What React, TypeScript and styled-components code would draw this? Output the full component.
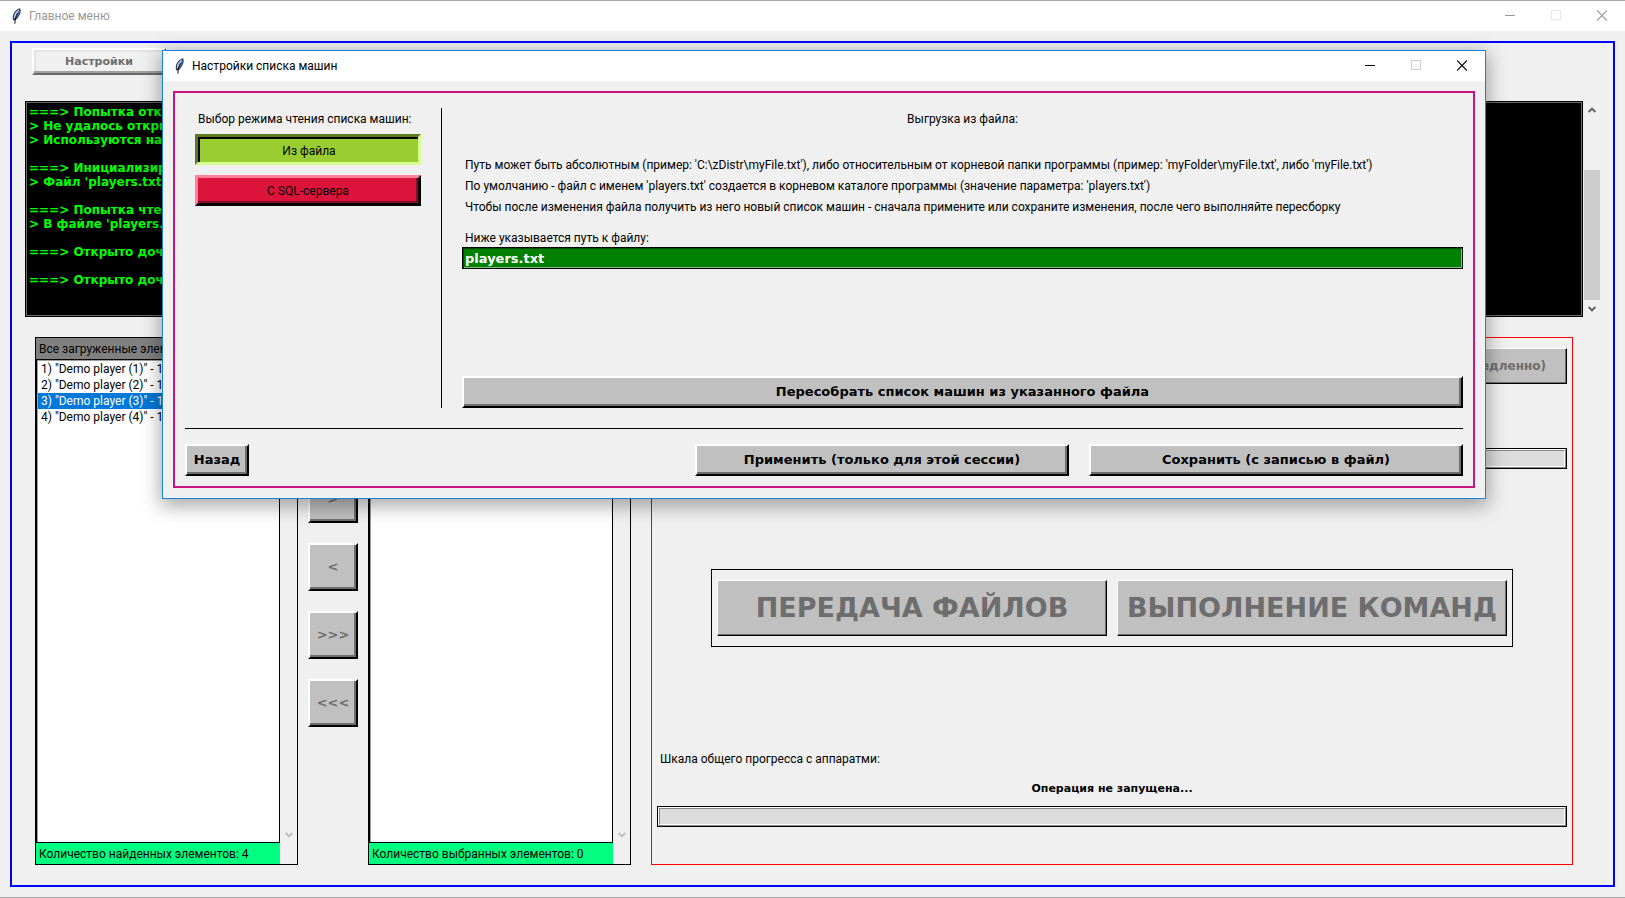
import React, { useState } from 'react';
import styled, { createGlobalStyle, css } from 'styled-components';

const uiFont = 'Roboto, "Open Sans", sans-serif';
const boldFont = '"DejaVu Sans", sans-serif';

const GlobalStyle = createGlobalStyle`
  *, *::before, *::after { box-sizing: border-box; }
  body {
    margin: 0;
    background: #f0f0f0;
    color: #000;
    font: 12px/16px ${uiFont};
  }
  button, input { font: inherit; color: inherit; margin: 0; }
  button { padding: 0; }
  ul, p, h1, h2 { margin: 0; padding: 0; font-size: inherit; font-weight: normal; }
  ul { list-style: none; }
`;

/* ---------- window chrome ---------- */

const Desktop = styled.div`
  position: relative;
  display: flex;
  flex-direction: column;
  min-height: 100vh;
  border-top: 1px solid #aaa;
  border-bottom: 1px solid #aaa;
  overflow: hidden;
`;

const TitleBar = styled.header<{ $inactive?: boolean }>`
  display: flex;
  align-items: center;
  height: 30px;
  padding-left: 12px;
  gap: 8px;
  background: #fff;
  color: ${(p) => (p.$inactive ? '#999' : '#000')};
`;

const TitleText = styled.h1`
  flex: 1;
  white-space: nowrap;
`;

const WindowControls = styled.div`
  display: flex;
  align-self: stretch;
`;

const ControlButton = styled.button<{ $ink: string }>`
  display: flex;
  align-items: center;
  justify-content: center;
  width: 46px;
  padding-bottom: 1px;
  border: 0;
  background: none;
  color: ${(p) => p.$ink};
`;

const Feather = () => (
  <svg width="9" height="16" viewBox="0 0 9 16" aria-hidden="true">
    <path d="M7.9 0.3 C5.4 0.6 2.6 3.2 1.4 6.2 C0.6 8.4 0.6 10.2 1.2 12.2 L3 12.4 C5 11.4 6.6 9.4 7.2 7.6 L8.2 5.6 C8.9 3.6 8.9 1.6 7.9 0.3 Z" fill="#2b3340" />
    <path d="M7.3 1.2 C5 2.2 3.2 4.4 2.4 6.6 C1.8 8.2 1.7 9.6 2 11 C4 9 6.2 5.4 7.3 1.2 Z" fill="#a9cdf8" />
    <path d="M7.6 1.6 C7.2 5 5.2 8.4 3.2 11.2 C4.8 10.4 6 8.8 6.4 7.2 C7.6 5.8 8.2 3.6 7.6 1.6 Z" fill="#4a8ae0" />
    <path d="M5.6 5 C4 8 2.9 11 2.9 15.8" fill="none" stroke="#000" strokeWidth="0.9" />
  </svg>
);

type ControlsProps = { ink: string; faint: string };

const Controls = ({ ink, faint }: ControlsProps) => (
  <WindowControls>
    <ControlButton $ink={ink} aria-label="Свернуть">
      <svg width="10" height="11" viewBox="0 0 10 11"><path d="M0 5.5H10" stroke="currentColor" /></svg>
    </ControlButton>
    <ControlButton $ink={faint} aria-label="Развернуть" disabled>
      <svg width="10" height="11" viewBox="0 0 10 11"><path d="M0.5 0.5H9.5V9.5H0.5Z" fill="none" stroke="currentColor" /></svg>
    </ControlButton>
    <ControlButton $ink={ink} aria-label="Закрыть">
      <svg width="10" height="11" viewBox="0 0 10 11"><path d="M0 0.5L10 10.5M10 0.5L0 10.5" stroke="currentColor" strokeWidth="1.1" /></svg>
    </ControlButton>
  </WindowControls>
);

/* ---------- raised and sunken widgets ---------- */

const BevelButton = styled.button<{ $edge: number; $size: number }>`
  border: ${(p) => p.$edge}px solid;
  border-color: #fff #000 #000 #fff;
  background: #c0c0c0;
  box-shadow: inset ${(p) => -p.$edge}px ${(p) => -p.$edge}px 0 #6e6e6e;
  font: bold ${(p) => p.$size}px/16px ${boldFont};
  white-space: nowrap;
  &:disabled { color: #6d6d6d; }
`;

const SettingsButton = styled.button`
  width: 134px;
  height: 27px;
  border: 2px solid;
  border-color: #fff #696969 #696969 #fff;
  background: #f0f0f0;
  box-shadow: inset -2px -2px 0 #a0a0a0, inset 2px 2px 0 #e3e3e3;
  font: bold 11px/16px ${boldFont};
  &:disabled { color: #6d6d6d; }
`;

const ModeButton = styled.button<{ $active: boolean }>`
  height: 31px;
  border: 3px solid;
  ${(p) =>
    p.$active
      ? css`
          border-color: #5c7b1f #d6ff8c #d6ff8c #5c7b1f;
          background: #9acd32;
          box-shadow: inset 2px 2px 0 #000;
          padding: 2px 0 0 2px;
        `
      : css`
          border-color: #ff8398 #000 #000 #ff8398;
          background: #dc143c;
          box-shadow: inset -2px -2px 0 #840c24;
        `}
`;

/* ---------- scroll bars ---------- */

const ScrollTrack = styled.div`
  display: flex;
  flex-direction: column;
  justify-content: space-between;
  width: 16px;
`;

const ListScroll = styled(ScrollTrack)`
  margin: 21px 0 21px 1px;
`;

const ScrollArrow = styled.button<{ $ink: string }>`
  display: flex;
  align-items: center;
  justify-content: center;
  height: 17px;
  border: 0;
  background: none;
  color: ${(p) => p.$ink};
`;

const ScrollThumb = styled.div`
  height: 130px;
  margin-top: auto;
  background: #cdcdcd;
`;

const UpArrow = ({ ink }: { ink: string }) => (
  <ScrollArrow $ink={ink} aria-label="Вверх">
    <svg width="8" height="6" viewBox="0 0 8 6"><path d="M0.7 5L4 1.6L7.3 5" fill="none" stroke="currentColor" strokeWidth="2" /></svg>
  </ScrollArrow>
);

const DownArrow = ({ ink }: { ink: string }) => (
  <ScrollArrow $ink={ink} aria-label="Вниз">
    <svg width="8" height="6" viewBox="0 0 8 6"><path d="M0.7 1L4 4.4L7.3 1" fill="none" stroke="currentColor" strokeWidth="2" /></svg>
  </ScrollArrow>
);

/* ---------- main window ---------- */

const MainFrame = styled.main`
  flex: 1;
  display: flex;
  flex-direction: column;
  margin: 10px;
  border: 2px solid #00f;
  padding-bottom: 20px;
`;

const TopBar = styled.div`
  display: flex;
  padding: 5px 20px 26px;
`;

const ConsoleRow = styled.section`
  display: flex;
  gap: 1px;
  padding: 0 13px;
`;

const Console = styled.pre`
  flex: 1;
  height: 216px;
  margin: 0;
  padding: 3px;
  border: 1px solid #000;
  box-shadow: inset 0 0 0 1px #6b6b6b;
  background: #000;
  color: #0f0;
  font: bold 12px/14px ${boldFont};
  overflow: hidden;
`;

const WorkArea = styled.section`
  flex: 1;
  display: grid;
  grid-template-columns: 263px 50px 263px 1fr;
  column-gap: 10px;
  padding: 20px 40px 0 23px;
`;

const ListFrame = styled.section`
  display: grid;
  grid-template-columns: 1fr 17px;
  border: 1px solid #000;
`;

const ListColumn = styled.div`
  display: flex;
  flex-direction: column;
`;

const ListLabel = styled.p<{ $fill: string }>`
  height: 21px;
  padding: 3px;
  background: ${(p) => p.$fill};
  white-space: nowrap;
`;

const ListBox = styled.ul`
  flex: 1;
  padding: 1px;
  border: 1px solid #000;
  background: #fff;
  box-shadow: inset 1px 1px 0 #a0a0a0;
`;

const ListItem = styled.li<{ $selected: boolean }>`
  height: 16px;
  padding-left: 3px;
  white-space: nowrap;
  overflow: hidden;
  background: ${(p) => (p.$selected ? '#0078d7' : 'none')};
  color: ${(p) => (p.$selected ? '#fff' : '#000')};
`;

const MoveColumn = styled.div`
  display: flex;
  flex-direction: column;
  justify-content: center;
  gap: 20px;
`;

const MoveButton = styled(BevelButton)`
  height: 48px;
`;

const ActionPanel = styled.section`
  display: flex;
  flex-direction: column;
  justify-content: space-between;
  margin-left: 10px;
  padding: 10px 5px 37px;
  border: 1px solid #f00;
`;

const PanelTop = styled.div`
  display: flex;
  flex-direction: column;
  gap: 64px;
`;

const StopButton = styled(BevelButton)`
  align-self: flex-end;
  height: 36px;
  padding: 0 20px;
`;

const BigButtons = styled.div`
  display: grid;
  grid-template-columns: 1fr 1fr;
  gap: 10px;
  margin: 0 54px;
  padding: 10px 5px;
  border: 1px solid #000;
`;

const BigButton = styled(BevelButton)`
  height: 56px;
`;

const ProgressBlock = styled.div`
  display: flex;
  flex-direction: column;
  gap: 5px;
`;

const ProgressLabel = styled.label`
  padding-left: 3px;
  line-height: 25px;
`;

const ProgressStatus = styled.output`
  text-align: center;
  font: bold 11px/24px ${boldFont};
`;

const ProgressFrame = styled.div`
  display: flex;
  height: 21px;
  border: 1px solid #000;
`;

const Progress = styled.progress`
  flex: 1;
  width: 100%;
  height: 19px;
  appearance: none;
  border: 1px solid;
  border-color: #fff #888 #888 #fff;
  &::-webkit-progress-bar {
    border: 1px solid;
    border-color: #888 #fff #fff #888;
    background: #dcdcdc;
  }
  &::-webkit-progress-value { background: #06b025; }
`;

/* ---------- settings dialog ---------- */

const Dialog = styled.section`
  position: absolute;
  top: 49px;
  left: 162px;
  right: 139px;
  border: 1px solid #1883d7;
  background: #f0f0f0;
  box-shadow: 0 5px 18px 2px rgba(0, 0, 0, 0.34);
`;

const DialogFrame = styled.div`
  margin: 10px;
  padding: 15px 10px 10px;
  border: 2px solid #c71585;
`;

const DialogBody = styled.div`
  display: grid;
  grid-template-columns: 246px 1fr;
  height: 300px;
`;

const ModeColumn = styled.div`
  display: flex;
  flex-direction: column;
  gap: 10px;
  padding: 3px 10px;
`;

const ModeCaption = styled.h2`
  padding-left: 3px;
  height: 13px;
  white-space: nowrap;
`;

const FileColumn = styled.div`
  display: flex;
  flex-direction: column;
  margin-left: 10px;
  padding-left: 20px;
  border-left: 1px solid #000;
`;

const FileCaption = styled.h2`
  padding: 3px 0 28px;
  text-align: center;
`;

const Hint = styled.p`
  padding-left: 3px;
  line-height: 21px;
  white-space: nowrap;
`;

const PathLabel = styled.label`
  margin-top: 11px;
  padding-left: 3px;
  line-height: 18px;
`;

const PathInput = styled.input`
  width: 100%;
  height: 22px;
  padding: 0 2px;
  border: 1px solid #000;
  border-radius: 0;
  outline: none;
  background: #008000;
  box-shadow: inset 1px 1px 0 #004b00, inset -1px -1px 0 #80c080;
  color: #fff;
  font: bold 13px/16px ${boldFont};
`;

const RebuildButton = styled(BevelButton)`
  height: 32px;
  margin-top: auto;
`;

const DialogFooter = styled.footer`
  display: grid;
  grid-template-columns: 64px 1fr 374px 374px;
  column-gap: 20px;
  margin-top: 20px;
  padding-top: 15px;
  border-top: 1px solid #000;
`;

const FooterButton = styled(BevelButton)<{ $column: number }>`
  grid-column: ${(p) => p.$column};
  height: 32px;
`;

/* ---------- content ---------- */

const logLines = [
  '===> Попытка открытия',
  '> Не удалось открыть',
  '> Используются настройки',
  '',
  '===> Инициализирован файл',
  "> Файл 'players.txt'",
  '',
  '===> Попытка чтения',
  "> В файле 'players.txt'",
  '',
  '===> Открыто дочернее окно',
  '',
  '===> Открыто дочернее окно',
];

const players = [1, 2, 3, 4].map((n) => `${n}) "Demo player (${n})" - 127.0.0.1`);

type PlayerListProps = { title: string; items: string[]; selected: number; summary: string };

const PlayerList = ({ title, items, selected, summary }: PlayerListProps) => (
  <ListFrame>
    <ListColumn>
      <ListLabel $fill="#808080">{title}</ListLabel>
      <ListBox role="listbox" aria-label={title}>
        {items.map((item, i) => (
          <ListItem key={item} role="option" aria-selected={i === selected} $selected={i === selected}>
            {item}
          </ListItem>
        ))}
      </ListBox>
      <ListLabel $fill="#00ff7f">{summary}</ListLabel>
    </ListColumn>
    <ListScroll>
      <UpArrow ink="#bfbfbf" />
      <DownArrow ink="#bfbfbf" />
    </ListScroll>
  </ListFrame>
);

export default function App() {
  const [mode, setMode] = useState<'file' | 'sql'>('file');

  return (
    <>
      <GlobalStyle />
      <Desktop>
        <TitleBar $inactive>
          <Feather />
          <TitleText>Главное меню</TitleText>
          <Controls ink="#999" faint="#e6e6e6" />
        </TitleBar>
        <MainFrame>
          <TopBar>
            <SettingsButton disabled>Настройки</SettingsButton>
          </TopBar>
          <ConsoleRow>
            <Console>{logLines.join('\n')}</Console>
            <ScrollTrack>
              <UpArrow ink="#606060" />
              <ScrollThumb />
              <DownArrow ink="#606060" />
            </ScrollTrack>
          </ConsoleRow>
          <WorkArea>
            <PlayerList
              title="Все загруженные элементы"
              items={players}
              selected={2}
              summary="Количество найденных элементов: 4"
            />
            <MoveColumn>
              {['>', '<', '>>>', '<<<'].map((label) => (
                <MoveButton key={label} $edge={2} $size={13} disabled>{label}</MoveButton>
              ))}
            </MoveColumn>
            <PlayerList
              title="Выбранные элементы"
              items={[]}
              selected={-1}
              summary="Количество выбранных элементов: 0"
            />
            <ActionPanel>
              <PanelTop>
                <StopButton $edge={1} $size={12} disabled>Остановить (немедленно)</StopButton>
                <ProgressFrame>
                  <Progress value={0} max={100} aria-label="Прогресс операции" />
                </ProgressFrame>
              </PanelTop>
              <BigButtons>
                <BigButton $edge={1} $size={27} disabled>ПЕРЕДАЧА ФАЙЛОВ</BigButton>
                <BigButton $edge={1} $size={27} disabled>ВЫПОЛНЕНИЕ КОМАНД</BigButton>
              </BigButtons>
              <ProgressBlock>
                <ProgressLabel htmlFor="total">Шкала общего прогресса с аппаратми:</ProgressLabel>
                <ProgressStatus>Операция не запущена...</ProgressStatus>
                <ProgressFrame>
                  <Progress id="total" value={0} max={100} />
                </ProgressFrame>
              </ProgressBlock>
            </ActionPanel>
          </WorkArea>
        </MainFrame>

        <Dialog role="dialog" aria-label="Настройки списка машин">
          <TitleBar>
            <Feather />
            <TitleText>Настройки списка машин</TitleText>
            <Controls ink="#000" faint="#ccc" />
          </TitleBar>
          <DialogFrame>
            <DialogBody>
              <ModeColumn>
                <ModeCaption>Выбор режима чтения списка машин:</ModeCaption>
                <ModeButton $active={mode === 'file'} onClick={() => setMode('file')}>Из файла</ModeButton>
                <ModeButton $active={mode === 'sql'} onClick={() => setMode('sql')}>С SQL-сервера</ModeButton>
              </ModeColumn>
              <FileColumn>
                <FileCaption>Выгрузка из файла:</FileCaption>
                <Hint>Путь может быть абсолютным (пример: 'C:\zDistr\myFile.txt'), либо относительным от корневой папки программы (пример: 'myFolder\myFile.txt', либо 'myFile.txt')</Hint>
                <Hint>По умолчанию - файл с именем 'players.txt' создается в корневом каталоге программы (значение параметра: 'players.txt')</Hint>
                <Hint>Чтобы после изменения файла получить из него новый список машин - сначала примените или сохраните изменения, после чего выполняйте пересборку</Hint>
                <PathLabel htmlFor="path">Ниже указывается путь к файлу:</PathLabel>
                <PathInput id="path" type="text" defaultValue="players.txt" />
                <RebuildButton $edge={2} $size={13}>Пересобрать список машин из указанного файла</RebuildButton>
              </FileColumn>
            </DialogBody>
            <DialogFooter>
              <FooterButton $edge={2} $size={13} $column={1}>Назад</FooterButton>
              <FooterButton $edge={2} $size={13} $column={3}>Применить (только для этой сессии)</FooterButton>
              <FooterButton $edge={2} $size={13} $column={4}>Сохранить (с записью в файл)</FooterButton>
            </DialogFooter>
          </DialogFrame>
        </Dialog>
      </Desktop>
    </>
  );
}
